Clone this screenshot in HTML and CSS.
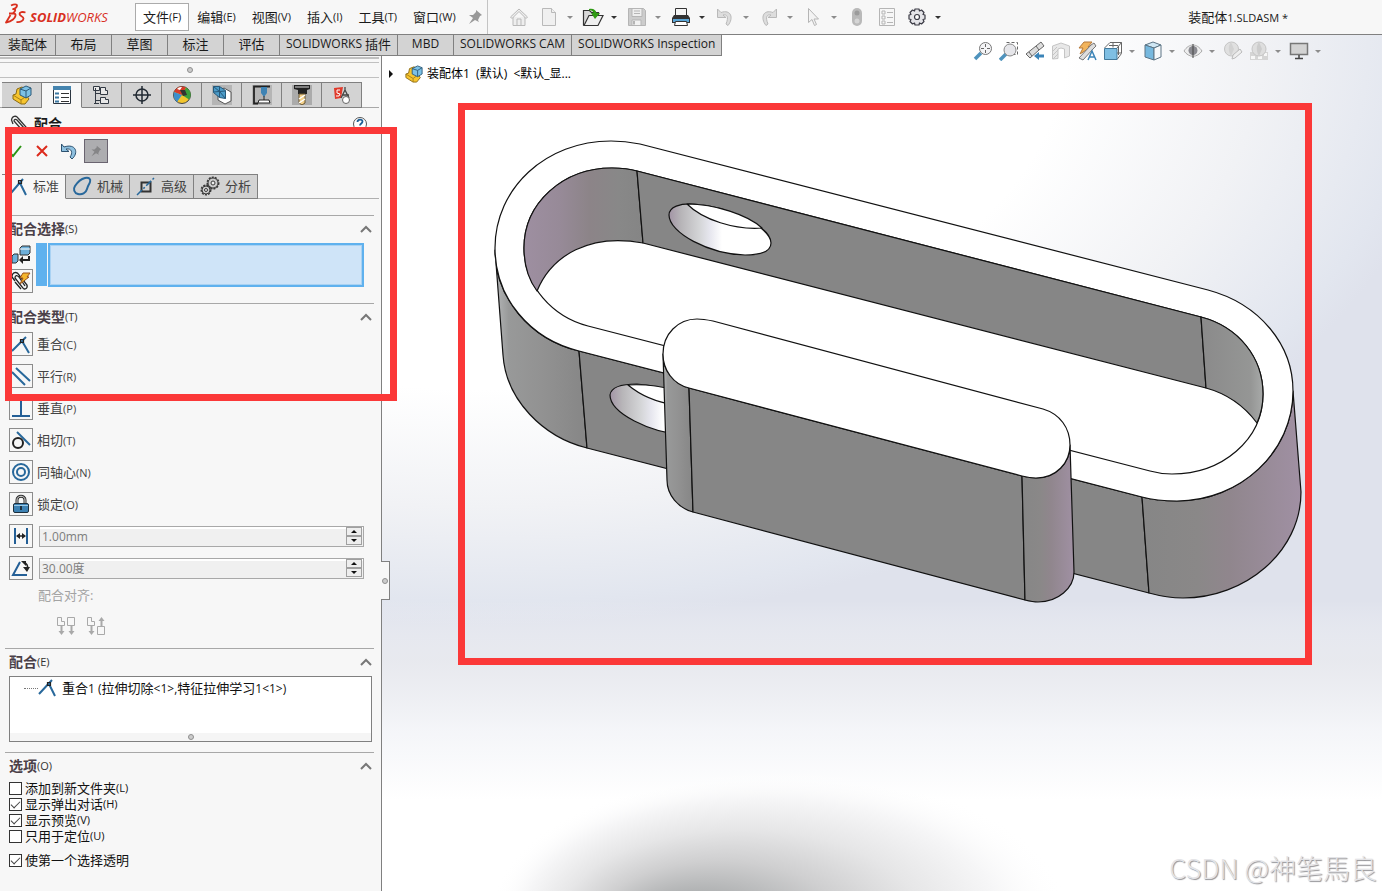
FILE: index.html
```html
<!DOCTYPE html>
<html lang="zh-CN">
<head>
    <meta charset="UTF-8">
    <title>装配体1.SLDASM</title>
    <link rel="stylesheet" href="styles.css">
</head>
<body>
    <header class="title-bar">
        <div class="brand">
            <svg width="22" height="22" viewBox="0 0 22 22" fill="none" stroke="#d9301f" stroke-width="1.800" stroke-linejoin="round">
                <path d="M6 2.500C9 1 12 1 12 2.500S10 5.500 8 6c3 0 3 2 0 4"/>
                <path d="M4 10.500h4.500c3.500 0 2 4-.5 6s-4.500 2.500-7 3L5.500 12"/>
                <path d="M20.500 9.500c-3-1-6-.5-6 1.500s4 2.500 4 4.500-3 4-7 3.500"/>
            </svg>
            <span><b>SOLID</b>WORKS</span>
        </div>
        <nav class="menu">
            <button class="menu-item open">文件<span class="key">(F)</span></button>
            <button class="menu-item">编辑<span class="key">(E)</span></button>
            <button class="menu-item">视图<span class="key">(V)</span></button>
            <button class="menu-item">插入<span class="key">(I)</span></button>
            <button class="menu-item">工具<span class="key">(T)</span></button>
            <button class="menu-item">窗口<span class="key">(W)</span></button>
        </nav>
        <button class="pin" aria-label="固定">
            <svg width="16" height="16" viewBox="0 0 16 16" fill="#999"><path d="M9 1l6 5-2 1-2 4 1 2-4-2-6 4 4-6-4-3 4 0 3-3z"/></svg>
        </button>
        <div class="quick-tools">
            <button class="tool" aria-label="主页"><svg width="20" height="20" viewBox="0 0 20 20" fill="#eee" stroke="#b9b9b9"><path d="M4 10v8.500h12V10"/><path d="M1.500 10 10 2l8.500 8-1.500 1.500-7-7-7 7z"/><path d="M8 18v-6h4v6"/></svg></button>
            <button class="tool" aria-label="新建"><svg width="20" height="20" viewBox="0 0 20 20" fill="#f0f0f0" stroke="#b9b9b9"><path d="M3.500 1.500h9l4 4v13h-13z"/><path d="M12.500 1.500v4h4"/></svg></button>
            <button class="caret dim" aria-label="更多"></button>
            <button class="tool" aria-label="打开"><svg width="22" height="20" viewBox="0 0 22 20" stroke="#333" stroke-width="1.200"><path d="M1.500 18.500v-15h6l2 2h7v3" fill="#d8d8d8"/><path d="M2 18.500 7 8.500h14l-5 10z" fill="#eee"/><path d="M7 2c4-1 7 1 7.500 4H18l-5 6-4-6h2.500C11 4 9 3 7 3.500z" fill="#2f9a13" stroke="none"/></svg></button>
            <button class="caret" aria-label="更多"></button>
            <button class="tool" aria-label="保存"><svg width="20" height="20" viewBox="0 0 20 20" fill="#ccc" stroke="#b5b5b5"><path d="M1.500 1.500h15l2 2v15h-17z"/><path d="M5 1.500h10v8H5z" fill="#eee"/><path d="M7 4h6M7 6.500h6"/><path d="M5 13h9v5.500H5z" fill="#f2f2f2"/><path d="M7 14v3.500" stroke-width="2"/></svg></button>
            <button class="caret dim" aria-label="更多"></button>
            <button class="tool" aria-label="打印"><svg width="20" height="20" viewBox="0 0 20 20"><path d="M4.500 1.500h11v8h-11z" fill="#f5f5f5" stroke="#333"/><path d="M3 8h14l2 3v5H1v-5z" fill="#333"/><path d="M2 12h16v3H2z" fill="#5aa5d6"/><path d="M4.500 14.500h11l1 4h-13z" fill="#fff" stroke="#333"/></svg></button>
            <button class="caret" aria-label="更多"></button>
            <button class="tool" aria-label="撤销"><svg width="20" height="20" viewBox="0 0 20 20" fill="#ddd" stroke="#b9b9b9"><path d="M2.500 2v8.500H11L8 8c4-1 6 2 3 9l2 1.500C19 11 16 2 6 5.500z"/></svg></button>
            <button class="caret dim" aria-label="更多"></button>
            <button class="tool" aria-label="重做"><svg width="20" height="20" viewBox="0 0 20 20" fill="#ddd" stroke="#b9b9b9"><path d="M17.500 2v8.500H9L12 8c-4-1-6 2-3 9l-2 1.500C1 11 4 2 14 5.500z"/></svg></button>
            <button class="caret dim" aria-label="更多"></button>
            <button class="tool" aria-label="选择"><svg width="20" height="20" viewBox="0 0 20 20" fill="#f3f3f3" stroke="#b5b5b5"><path d="M5.500 1.500v14l3.500-3 2.500 6 2-1-2.500-5.500h4.500z"/></svg></button>
            <button class="caret dim" aria-label="更多"></button>
            <button class="tool" aria-label="重建"><svg width="20" height="20" viewBox="0 0 20 20"><rect x="5" y="1" width="10" height="18" rx="5" fill="#b9b9b9"/><circle cx="10" cy="6" r="2.500" fill="#9b9b9b"/><circle cx="10" cy="14" r="2.500" fill="#d5d5d5"/></svg></button>
            <button class="tool" aria-label="文件属性"><svg width="20" height="20" viewBox="0 0 20 20" fill="none" stroke="#b5b5b5"><path d="M2.500 1.500h15v17h-15zM5 4h3v3H5zM5 9h3v3H5zM5 14h3v3H5zM10 5.500h6M10 10.500h6M10 15.500h6"/></svg></button>
            <button class="tool" aria-label="选项"><svg width="18" height="18" viewBox="0 0 18 18" fill="#e4e4e8" stroke="#3a3a44" stroke-width="1.200" stroke-linejoin="round"><path d="M7 1h4l.5 2 2-1 2.500 2.500-1 2 2 .5v4l-2 .5 1 2-2.500 2.500-2-1-.5 2H7l-.5-2-2 1L2 13.500l1-2L1 11V7l2-.5-1-2L4.500 2l2 1z"/><circle cx="9" cy="9" r="2.500" fill="#fff"/></svg></button>
            <button class="caret" aria-label="更多"></button>
        </div>
        <div class="doc-name">装配体<span class="key">1.SLDASM *</span></div>
    </header>

    <div class="workspace">
        <!-- graphics area: backdrop and both parts -->
        <div class="scene">
            <svg width="100%" height="100%" viewBox="382 35 1000 856" preserveAspectRatio="xMidYMid slice">
                <defs>
                    <radialGradient id="sky" gradientUnits="userSpaceOnUse" cx="0" cy="0" r="1" gradientTransform="translate(480 35) scale(980 590)">
                        <stop offset="0.600" stop-color="#fff"/>
                        <stop offset="0.800" stop-color="#f1f2f5"/>
                        <stop offset="0.960" stop-color="#e2e6ef"/>
                        <stop offset="1.000" stop-color="#dfe2ec"/>
                    </radialGradient>
                    <linearGradient id="ground" gradientUnits="userSpaceOnUse" x1="0" y1="600" x2="0" y2="800">
                        <stop offset="0" stop-color="#fff" stop-opacity="0"/>
                        <stop offset="0.300" stop-color="#f0f0f1" stop-opacity="0.500"/>
                        <stop offset="0.650" stop-color="#f8f9fb" stop-opacity="0.850"/>
                        <stop offset="1" stop-color="#fff"/>
                    </linearGradient>
                    <radialGradient id="shade" gradientUnits="userSpaceOnUse" cx="0" cy="0" r="1" fx="-0.360" fy="0.080" gradientTransform="translate(780 915) scale(290 145)">
                        <stop offset="0" stop-color="#9c9c9c"/>
                        <stop offset="0.200" stop-color="#adafb0"/>
                        <stop offset="0.420" stop-color="#cfcfd0"/>
                        <stop offset="0.620" stop-color="#e6e6e7"/>
                        <stop offset="0.820" stop-color="#f6f6f7"/>
                        <stop offset="1" stop-color="#fff" stop-opacity="0"/>
                    </radialGradient>
                    <linearGradient id="wallLeft"><stop offset="0" stop-color="#9e8fa1"/><stop offset="0.300" stop-color="#978a98"/><stop offset="0.550" stop-color="#8c8488"/><stop offset="0.800" stop-color="#888"/><stop offset="1" stop-color="#858585"/></linearGradient>
                    <linearGradient id="wallRight"><stop offset="0" stop-color="#8a8a8a"/><stop offset="0.800" stop-color="#959695"/><stop offset="1" stop-color="#a8aaa9"/></linearGradient>
                    <linearGradient id="outLeft"><stop offset="0" stop-color="#b5b7b8"/><stop offset="0.150" stop-color="#989999"/><stop offset="0.500" stop-color="#929292"/><stop offset="1" stop-color="#868686"/></linearGradient>
                    <linearGradient id="outRight"><stop offset="0" stop-color="#868686"/><stop offset="0.350" stop-color="#8a8888"/><stop offset="0.550" stop-color="#90868d"/><stop offset="1" stop-color="#a090a3"/></linearGradient>
                    <linearGradient id="hole"><stop offset="0" stop-color="#a294a5"/><stop offset="0.120" stop-color="#b7b5b8"/><stop offset="0.300" stop-color="#d4d5d7"/><stop offset="0.400" stop-color="#e6e6ee"/><stop offset="0.520" stop-color="#fff"/></linearGradient>
                </defs>
                <rect x="382" y="35" width="1000" height="856" fill="url(#sky)"/>
                <rect x="382" y="600" width="1000" height="291" fill="url(#ground)"/>
                <ellipse cx="780" cy="915" rx="290" ry="145" fill="url(#shade)"/>

                <g stroke="#111" stroke-width="1.200" stroke-linejoin="round">
                    <path fill="url(#outLeft)" d="M495 250 503 355C506 400 543 437 587 448L579 351C530 339 495 298 495 250Z"/>
                    <path fill="#868686" d="M579 351 1142 497 1149 593 587 448Z"/>
                    <path fill="url(#outRight)" d="M1142 497C1153 500 1165 501 1177 501 1240 501 1293 452 1293 391L1301 492C1301 552 1245 598 1183 598 1170 598 1160 596 1149 593Z"/>
                    <path fill="#fff" d="M640 144C630 142 620 141 611 141 546 141 495 188 495 248 495 298 530 339 579 351L1142 497C1153 500 1165 501 1177 501 1240 501 1293 452 1293 391 1293 345 1260 304 1208 290Z"/>
                    <path fill="#fff" d="M637 171C630 169 622 168 612 168 563 168 524 203 524 248 524 286 553 317 588 326L1150 471C1157 473 1164 474 1172 474 1222 474 1263 440 1263 394 1263 358 1239 327 1201 317Z"/>
                    <path fill="url(#wallLeft)" d="M637 171C630 169 622 168 612 168 563 168 524 203 524 248 524 264 528 279 537 291 552 255 590 233 643 243Z"/>
                    <path fill="#868686" d="M637 171 1201 317 1206 388 643 243Z"/>
                    <path fill="url(#wallRight)" d="M1201 317C1239 327 1263 358 1263 394 1263 404 1261 414 1257 423 1245 407 1228 394 1206 388Z"/>
                    <path fill="url(#hole)" d="M669 215C669 207 680 203 694 204 728 206 771 227 771 243 771 251 761 255 745 255 709 254 669 233 669 215Z"/>
                    <path fill="#fff" d="M687 204C703 220 735 230 762 228 748 215 715 204 687 204Z"/>
                    <path fill="url(#hole)" d="M610 395C611 387 622 384 637 384 670 386 712 408 712 424 711 432 700 436 685 435 650 433 610 413 610 395Z"/>
                    <path fill="#fff" d="M628 385C640 395 655 402 675 405V390C660 386 644 384 628 385Z"/>
                </g>
                <g stroke="#111" stroke-width="1.200" stroke-linejoin="round">
                    <path fill="url(#outLeft)" d="M663 354 667 480C667 495 678 508 693 512L689 388C673 384 663 370 663 354Z"/>
                    <path fill="#868686" d="M689 388 1022 476 1025 600 693 512Z"/>
                    <path fill="url(#outRight)" d="M1022 476C1026 477 1031 478 1036 478 1056 478 1070 463 1070 445L1074 572C1074 588 1058 602 1038 602 1033 602 1029 601 1025 600Z"/>
                    <path fill="#fff" d="M713 321C708 320 702 319 697 319 678 319 663 334 663 354 663 370 673 384 689 388L1022 476C1026 477 1031 478 1036 478 1056 478 1070 463 1070 445 1070 428 1060 414 1043 409Z"/>
                </g>
                <rect x="461.500" y="106.500" width="847" height="555" fill="none" stroke="#fb3838" stroke-width="7"/>
            </svg>
        </div>

        <nav class="command-tabs">
            <button>装配体</button>
            <button>布局</button>
            <button>草图</button>
            <button>标注</button>
            <button>评估</button>
            <button><span class="lat">SOLIDWORKS</span> 插件</button>
            <button><span class="lat">MBD</span></button>
            <button><span class="lat">SOLIDWORKS CAM</span></button>
            <button><span class="lat">SOLIDWORKS Inspection</span></button>
        </nav>

        <div class="view-tools">
            <button class="tool" aria-label="整屏显示全图"><svg width="20" height="20" viewBox="0 0 20 20"><path d="M2 18l6-6" stroke="#4f93bd" stroke-width="3.500"/><circle cx="12.500" cy="7.500" r="6" fill="#f4f4f6" stroke="#777"/><path d="M12.500 3v9M8 7.500h9" stroke="#666" stroke-dasharray="3 3"/></svg></button>
            <button class="tool" aria-label="局部放大"><svg width="20" height="20" viewBox="0 0 20 20"><path d="M7.500 1.500h11v12H14" fill="none" stroke="#666" stroke-dasharray="3 2"/><path d="M1 19l6-6" stroke="#4f93bd" stroke-width="3.500"/><circle cx="11" cy="9" r="6" fill="#e6e6ea" stroke="#888"/></svg></button>
            <button class="tool" aria-label="上一视图"><svg width="20" height="20" viewBox="0 0 20 20"><path d="M1 13 11 5l5-4 3 4-5 4-9 8z" fill="#ddd" stroke="#666"/><path d="M11 5l3 4M4 11l3 4" stroke="#666"/><path d="M9 15l5-4v2.500h5v3h-5V19z" fill="#3b84b8"/></svg></button>
            <button class="tool" aria-label="剖面视图"><svg width="20" height="20" viewBox="0 0 20 20" fill="#e8e8e8" stroke="#c5c5c5"><path d="M1.500 5 10 2l8.500 3v10l-5 2V8L10 7 7 8v9.500l-5.500.5z"/><path d="M2 10l4-4M2 14l5-5M2 18l5-5"/></svg></button>
            <button class="tool" aria-label="动态注解视图"><svg width="20" height="20" viewBox="0 0 20 20"><path d="M7 1h8l-4 5h3L3 13l3-6H2z" fill="#f2b45c" stroke="#b5793a"/><path d="M2 17 14 4l3-2 2 3-3 3L6 19z" fill="#ddd" stroke="#777"/><path d="M11 19l4-9 4 9M12 16h6" fill="none" stroke="#3b84b8" stroke-width="1.500"/></svg></button>
            <button class="tool" aria-label="视图定向"><svg width="20" height="20" viewBox="0 0 20 20" stroke="#666"><path d="M1.500 7 7 1.500h11.500v11L14 18.500" fill="#fff"/><path d="M1.500 7.500H14v11H1.500z" fill="#7fbfe3" stroke="#43799b"/><path d="M14 7l4.500-5.500M10 1.500v5M14 12h4M15.500 5v9M6 4.500h9" fill="none"/></svg></button>
            <button class="caret grey" aria-label="更多"></button>
            <button class="tool" aria-label="显示样式"><svg width="20" height="20" viewBox="0 0 20 20" stroke="#5c7485"><path d="M2 4l8-3 8 3-7 3z" fill="#cfe7f4"/><path d="M2 4l9 3v12l-9-3z" fill="#76b8de"/><path d="M11 7l7-3v12l-7 3z" fill="#f5f8fa"/></svg></button>
            <button class="caret grey" aria-label="更多"></button>
            <button class="tool" aria-label="隐藏/显示"><svg width="20" height="20" viewBox="0 0 20 20"><path d="M1 10c5-8 13-8 18 0-5 7-13 7-18 0z" fill="#eee" stroke="#aaa"/><circle cx="10" cy="9.500" r="4.500" fill="#8a8a90"/><path d="M10 3v14" stroke="#444"/></svg></button>
            <button class="caret grey" aria-label="更多"></button>
            <button class="tool" aria-label="编辑外观"><svg width="20" height="20" viewBox="0 0 20 20"><circle cx="8.500" cy="8" r="7" fill="#e0e0e0" stroke="#c5c5c5"/><path d="M8 1c-3 4-3 9 0 14l3-7z" fill="#d2d2d2"/><path d="M9 18l1-4 7-6 2 3-7 6z" fill="#eee" stroke="#bbb"/></svg></button>
            <button class="tool" aria-label="应用布景"><svg width="20" height="20" viewBox="0 0 20 20"><path d="M1 11h18v8H1z" fill="#d5d5d5"/><path d="M2 15h4v3H2zM9 15h4v3H9zM15 12h3v3h-3z" fill="#f7f7f7"/><circle cx="10" cy="8" r="7" fill="#dedede" stroke="#c5c5c5"/><path d="M10 1c-3 4-3 9 0 14l3-7z" fill="#ccc"/></svg></button>
            <button class="caret grey" aria-label="更多"></button>
            <button class="tool" aria-label="视图设定"><svg width="20" height="20" viewBox="0 0 20 20"><path d="M1.500 2.500h17v11h-17z" fill="#d3d3d3" stroke="#777" stroke-width="1.500"/><path d="M10 14v3M6 17.500h8" stroke="#444" stroke-width="1.500"/></svg></button>
            <button class="caret grey" aria-label="更多"></button>
        </div>

        <main class="columns">
            <aside class="panel">
                <div class="panel-top"><div class="grip"><i class="dot"></i></div></div>
                <nav class="manager-tabs">
                    <button aria-label="设计树"><svg width="20" height="20" viewBox="0 0 20 20"><path d="M1 10 4 9l1-5 5-2 3 2v4l4 6-4 5-4 0-8-5z" fill="#f7c52e" stroke="#8a6a14"/><path d="M1 10l8 5v4M9 15l4-3" fill="none" stroke="#a57f1a"/><path d="M8 4l6-3 5 2v7l-5 3-6-3z" fill="#7cc1e6" stroke="#2d5a78"/><path d="M8 4l6 2 5-3M14 6v7" fill="none" stroke="#2d5a78"/></svg></button>
                    <button class="active" aria-label="属性"><svg width="20" height="20" viewBox="0 0 20 20"><path d="M1.500 1.500h17v17h-17z" fill="#fff" stroke="#2b3540"/><path d="M1 1h18v4H1z" fill="#4584ae"/><path d="M3 7.500h4v2H3zM3 11.500h4v2H3zM3 15.500h4v2H3z" fill="#3b78a2"/><path d="M9 8.500h8M9 12.500h8M9 16.500h8" stroke="#333"/></svg></button>
                    <button aria-label="配置"><svg width="20" height="20" viewBox="0 0 20 20" fill="#e8e8e8" stroke="#333a44"><path d="M3.500 3v16M3.500 8.500H9M3.500 15.500H9M1.500 1.500h6v4h-6zM2 18.500h5"/><path d="M8.500 2.500h5v3h2v4h-7zM8.500 12.500h5v2h3v4h-8z"/></svg></button>
                    <button aria-label="尺寸"><svg width="20" height="20" viewBox="0 0 20 20" fill="none" stroke="#222a33" stroke-width="1.500"><circle cx="10" cy="10" r="6"/><path d="M10 1v18M1 10h18"/></svg></button>
                    <button aria-label="显示"><svg width="20" height="20" viewBox="0 0 20 20"><circle cx="10" cy="10" r="8.500" fill="#f2c52d" stroke="#444"/><path d="M10 10 2 7c2-5 7-7 12-4.500z" fill="#d63c2a"/><path d="M10 10 2 7c-1 4 0 7 3 10z" fill="#3b8fcb"/><path d="M14 2.500c5 3 6 8 3 12L10 10z" fill="#3b9f3b"/><path d="M8 5l5 0 2 5-4 1z" fill="#333"/><path d="M5 4c2-2 4-2 5-2l-2 3z" fill="#fff"/></svg></button>
                    <button aria-label="CAM 特征"><svg width="20" height="20" viewBox="0 0 20 20"><path d="M0 0h20v20H0z" fill="#b5b5b5"/><path d="M6 7l6-4 7 4v9l-6 3-7-4z" fill="#fff" stroke="#555"/><path d="M1.500 1.500h6l6 4v8l-6-1-6-5z" fill="#4b9cc9" stroke="#27597a"/><path d="M1.500 1.500l6 5 6 7M7.500 1.500v11M1.500 7l12-1" fill="none" stroke="#27597a"/></svg></button>
                    <button aria-label="CAM 操作"><svg width="20" height="20" viewBox="0 0 20 20"><path d="M0 0h20v20H0z" fill="#b5b5b5"/><path d="M5 1.500h-3v17h4M4 1.500h14" fill="none" stroke="#222" stroke-width="1.800"/><path d="M9 2h6v6l-3 4-3-4z" fill="#3e83b4"/><path d="M12 11v4" stroke="#222"/><path d="M7 15h10l1 3H6z" fill="#fff" stroke="#222"/></svg></button>
                    <button aria-label="CAM 刀具"><svg width="20" height="20" viewBox="0 0 20 20"><path d="M0 0h20v20H0z" fill="#ababab"/><path d="M2 0h16v4l-3 1v4H6V5L2 4z" fill="#222"/><path d="M3 2h14" stroke="#ddd"/><path d="M7 9h6v9l-3 2-3-2z" fill="#f2cf88" stroke="#695632"/><path d="M7 14l6-4M7 18l6-4" stroke="#fff" stroke-width="1.500"/></svg></button>
                    <button aria-label="检查"><svg width="20" height="20" viewBox="0 0 20 20"><path d="M2 3l9-1-2 11-6 1z" fill="#e03a2b"/><path d="M8 5H5v3l3 1-1 2H4" fill="none" stroke="#fff"/><path d="M13 2v3M13 5l-4 8M13 5l4 8M10 10h7" fill="none" stroke="#444" stroke-width="1.300"/><circle cx="14" cy="15" r="3.500" fill="#fff" stroke="#666"/></svg></button>
                </nav>

                <div class="panel-title">
                    <svg width="18" height="18" viewBox="0 0 18 18" fill="none" stroke="#333" stroke-width="1.300"><path d="M3 9 1.500 5C2 1 6 0 8 3l8 9c1 3-2 5-4 3L4 6c0-2 2-2 3-1l7 8"/></svg>
                    <h2>配合</h2>
                    <button class="help" aria-label="帮助"><svg width="16" height="16" viewBox="0 0 16 16"><circle cx="8" cy="8" r="6.500" fill="#fff" stroke="#555"/><path d="M5.500 6c0-3 5-3 5-.5C10.500 7.500 8 7.500 8 9.500M8 11v1.500" fill="none" stroke="#1f5f95" stroke-width="1.800"/></svg></button>
                </div>

                <div class="actions">
                    <button aria-label="确定"><svg width="18" height="18" viewBox="0 0 18 18"><path d="M3 10l4 4 8-10" fill="none" stroke="#2c9414" stroke-width="2"/></svg></button>
                    <button aria-label="取消"><svg width="18" height="18" viewBox="0 0 18 18"><path d="M4 4l10 10M14 4 4 14" stroke="#dc2a1c" stroke-width="2"/></svg></button>
                    <button aria-label="撤销"><svg width="18" height="18" viewBox="0 0 18 18"><path d="M1.500 2v7.500H9L6 7c6-1 7 4 4 8l2 2c7-6 4-16-8-12z" fill="#8fc1e0" stroke="#2d5270"/></svg></button>
                    <button class="keep" aria-label="保持可见"><svg width="12" height="12" viewBox="0 0 16 16" fill="#858587"><path d="M9 1l6 5-2 1-2 4 1 2-4-2-6 4 4-6-4-3 4 0 3-3z"/></svg></button>
                </div>

                <nav class="mate-tabs">
                    <button class="active"><svg width="20" height="20" viewBox="0 0 20 20" fill="none" stroke="#28689b" stroke-width="2"><path d="M3 17 15 3M12 7l6 12"/><path d="M10.500 4.500h3v3h-3z" stroke="#222" stroke-width="1.200"/></svg>标准</button>
                    <button><svg width="20" height="20" viewBox="0 0 20 20"><path d="M13 2c4-1 6 1 5 4s-2 3-3 7-5 6-9 5-5-5-3-8 6-7 10-8z" fill="none" stroke="#28689b" stroke-width="2"/></svg>机械</button>
                    <button><svg width="20" height="20" viewBox="0 0 20 20" fill="none"><path d="M5.500 6.500h9v9h-9z" stroke="#333" stroke-width="2"/><path d="M1 19 19 1" stroke="#28689b" stroke-width="1.500" stroke-dasharray="7 2 2 2"/></svg>高级</button>
                    <button><svg width="20" height="20" viewBox="0 0 20 20" fill="#ccc" stroke="#3a3a3a"><circle cx="13" cy="7" r="5.500" fill="none" stroke-width="2" stroke-dasharray="2 1"/><circle cx="13" cy="7" r="5"/><circle cx="13" cy="7" r="2" fill="#eee"/><circle cx="6" cy="14" r="4.500" fill="none" stroke-width="2" stroke-dasharray="2 1"/><circle cx="6" cy="14" r="4"/><circle cx="6" cy="14" r="1.500" fill="#eee"/></svg>分析</button>
                </nav>

                <section class="group">
                    <h3>配合选择<span class="key">(S)</span><svg class="fold" width="12" height="8" viewBox="0 0 12 8"><path d="M1 7l5-5 5 5"/></svg></h3>
                    <div class="selection">
                        <div class="selection-icons">
                            <button class="plain" aria-label="要配合的实体"><svg width="20" height="20" viewBox="0 0 20 20"><path d="M9 3l2-2h8v7l-2 2H9z" fill="#6eb0da" stroke="#333"/><path d="M9 4h10" stroke="#fff"/><path d="M1 11l2-2h4v7l-2 2H1z" fill="#6eb0da" stroke="#333"/><path d="M18 11v4h-7" fill="none" stroke="#222" stroke-width="2"/><path d="M12 11v8l-4-4z" fill="#222"/></svg></button>
                            <button class="box" aria-label="多配合模式"><svg width="20" height="20" viewBox="0 0 20 20"><path d="M4 10 1 6c0-5 5-6 7-2l8 10c1 4-3 5-4 3L4 7c0-3 2-3 4-1l6 9M4 11l6 7" fill="none" stroke="#222" stroke-width="1.300"/><path d="M12 2h7l-3 4h2l-9 7 3-6H9z" fill="#f4b52c" stroke="#9c531b"/></svg></button>
                        </div>
                        <div class="selection-mark"></div>
                        <textarea class="selection-box" aria-label="配合选择"></textarea>
                    </div>
                </section>

                <section class="group mates">
                    <h3>配合类型<span class="key">(T)</span><svg class="fold" width="12" height="8" viewBox="0 0 12 8"><path d="M1 7l5-5 5 5"/></svg></h3>
                    <div class="mate-list">
                        <button class="mate"><span class="box"><svg width="20" height="20" viewBox="0 0 20 20" fill="none" stroke="#28689b" stroke-width="2"><path d="M1 17 15 3M11 7l7 12"/><path d="M9.500 5.500h3v3h-3z" stroke="#222" stroke-width="1.200"/></svg></span><span>重合<span class="key">(C)</span></span></button>
                        <button class="mate"><span class="box"><svg width="20" height="20" viewBox="0 0 20 20" fill="none" stroke="#28689b" stroke-width="2"><path d="M1 6l13 13M5 2l14 13"/></svg></span><span>平行<span class="key">(R)</span></span></button>
                        <button class="mate"><span class="box"><svg width="20" height="20" viewBox="0 0 20 20" fill="none" stroke="#245f96" stroke-width="2"><path d="M10 1v17M1 18h18"/></svg></span><span>垂直<span class="key">(P)</span></span></button>
                        <button class="mate"><span class="box"><svg width="20" height="20" viewBox="0 0 20 20" fill="none" stroke="#28689b" stroke-width="2"><path d="M6 2l13 13"/><circle cx="7" cy="13" r="5" stroke="#222"/></svg></span><span>相切<span class="key">(T)</span></span></button>
                        <button class="mate"><span class="box"><svg width="20" height="20" viewBox="0 0 20 20" fill="none" stroke="#28689b" stroke-width="2"><circle cx="10" cy="10" r="8"/><circle cx="10" cy="10" r="4"/></svg></span><span>同轴心<span class="key">(N)</span></span></button>
                        <button class="mate"><span class="box"><svg width="20" height="20" viewBox="0 0 20 20"><path d="M6 10V6c0-5 8-5 8 0v4" fill="none" stroke="#333" stroke-width="3"/><path d="M6 10V6c0-5 8-5 8 0v4" fill="none" stroke="#ddd"/><rect x="2.500" y="9.500" width="15" height="9" rx="1.500" fill="#3d82b4" stroke="#1d2f3d"/><path d="M3 11.500h14" stroke="#9ccbe8"/><path d="M10 12v4" stroke="#1d2f3d" stroke-width="2"/></svg></span><span>锁定<span class="key">(O)</span></span></button>
                        <div class="mate">
                            <label class="box" for="distance"><svg width="20" height="20" viewBox="0 0 20 20"><path d="M4 2v16M16 2v16" stroke="#245f96" stroke-width="2"/><path d="M6 10h8" stroke="#222" stroke-width="1.500"/><path d="M5 10l4-3v6zM15 10l-4-3v6z" fill="#222"/></svg></label>
                            <div class="spin">
                                <input id="distance" type="text" value="1.00mm">
                                <div class="spin-buttons"><button class="up" aria-label="增加"></button><button class="down" aria-label="减少"></button></div>
                            </div>
                        </div>
                        <div class="mate">
                            <label class="box" for="angle"><svg width="20" height="20" viewBox="0 0 20 20"><path d="M9 4 2 17h14" fill="none" stroke="#245f96" stroke-width="2"/><path d="M13 5c3 0 4 3 3.500 6" fill="none" stroke="#222" stroke-width="1.500"/><path d="M10 3h5v5zM12 9h7l-3 5z" fill="#222"/></svg></label>
                            <div class="spin">
                                <input id="angle" type="text" value="30.00度">
                                <div class="spin-buttons"><button class="up" aria-label="增加"></button><button class="down" aria-label="减少"></button></div>
                            </div>
                        </div>
                    </div>
                    <p class="align-label">配合对齐:</p>
                    <div class="align-buttons">
                        <button aria-label="同向对齐" disabled><svg width="20" height="20" viewBox="0 0 20 20" fill="none" stroke="#a9a9a9"><path d="M1.500 9.500v-8h4v4h3v4zM11.500 1.500h7v8h-7z"/><path d="M5.500 9v7M15.500 9v7" stroke-width="2"/><path d="M2.500 15h6l-3 4zM12.500 15h6l-3 4z" fill="#a9a9a9" stroke="none"/></svg></button>
                        <button aria-label="反向对齐" disabled><svg width="20" height="20" viewBox="0 0 20 20" fill="none" stroke="#a9a9a9"><path d="M1.500 9.500v-8h4v4h3v4zM11.500 10.500h7v8h-7z"/><path d="M5.500 9v7M15.500 10V4" stroke-width="2"/><path d="M2.500 15h6l-3 4zM12.500 5h6l-3-4z" fill="#a9a9a9" stroke="none"/></svg></button>
                    </div>
                </section>

                <section class="group">
                    <h3>配合<span class="key">(E)</span><svg class="fold" width="12" height="8" viewBox="0 0 12 8"><path d="M1 7l5-5 5 5"/></svg></h3>
                    <div class="mate-tree">
                        <div class="tree-item"><i class="branch"></i><svg width="20" height="20" viewBox="0 0 20 20" fill="none" stroke="#28689b" stroke-width="2"><path d="M1 16 14 2M11 6l6 12"/><path d="M9.500 4.500h3v3h-3z" stroke="#222" stroke-width="1.200"/></svg><span>重合<span class="lat">1 (</span>拉伸切除<span class="lat">&lt;1&gt;,</span>特征拉伸学习<span class="lat">1&lt;1&gt;)</span></span></div>
                        <div class="tree-grip"><i class="dot"></i></div>
                    </div>
                </section>

                <section class="group options">
                    <h3>选项<span class="key">(O)</span><svg class="fold" width="12" height="8" viewBox="0 0 12 8"><path d="M1 7l5-5 5 5"/></svg></h3>
                    <label><input type="checkbox">添加到新文件夹<span class="key">(L)</span></label>
                    <label><input type="checkbox" checked>显示弹出对话<span class="key">(H)</span></label>
                    <label><input type="checkbox" checked>显示预览<span class="key">(V)</span></label>
                    <label><input type="checkbox">只用于定位<span class="key">(U)</span></label>
                    <label class="apart"><input type="checkbox" checked>使第一个选择透明</label>
                </section>
                <div class="panel-handle"><i class="dot"></i></div>
                <div class="marker"></div>
            </aside>

            <div class="viewport">
                <div class="flyout-tree">
                    <i class="expand"></i>
                    <svg width="18" height="18" viewBox="0 0 20 20"><path d="M1 10 4 9l1-5 5-2 3 2v4l4 6-4 5-4 0-8-5z" fill="#f7c52e" stroke="#8a6a14"/><path d="M1 10l8 5v4M9 15l4-3" fill="none" stroke="#a57f1a"/><path d="M8 4l6-3 5 2v7l-5 3-6-3z" fill="#7cc1e6" stroke="#2d5a78"/><path d="M8 4l6 2 5-3M14 6v7" fill="none" stroke="#2d5a78"/></svg>
                    <span>装配体1&nbsp; (默认) &nbsp;&lt;默认_显...</span>
                </div>
            </div>
        </main>
        <div class="watermark">CSDN @神笔馬良</div>
    </div>
</body>
</html>
```
FILE: styles.css
```css
* {
    box-sizing: border-box;
    margin: 0;
    padding: 0;
}

body {
    display: flex;
    flex-direction: column;
    min-height: 100vh;
    background: #f7f7f7;
    color: #1a1a1a;
    font-family: "Open Sans", "Noto Sans CJK SC", sans-serif;
    font-size: 13px;
    line-height: 18px;
}

button {
    display: flex;
    align-items: center;
    justify-content: center;
    border: 0;
    background: none;
    color: inherit;
    font: inherit;
    white-space: nowrap;
}

svg {
    display: block;
    flex: none;
}

.key {
    font-size: 11px;
}

.lat {
    font-size: 12px;
}

/* title bar */
.title-bar {
    display: flex;
    align-items: center;
    height: 35px;
    border-bottom: 1px solid #808080;
}

.brand {
    display: flex;
    align-items: center;
    gap: 3px;
    width: 135px;
    padding-left: 5px;
    color: #d9301f;
    font-style: italic;
}

.brand svg {
    margin-bottom: 6px;
}

.menu {
    display: flex;
}

.menu-item {
    height: 28px;
    padding: 0 7px;
    border: 1px solid transparent;
}

.menu-item.open {
    background: #fff;
    border-color: #ababab;
}

.pin {
    width: 24px;
    height: 34px;
    border-right: 1px solid #c4c4c4;
}

.quick-tools {
    display: flex;
    padding-left: 16px;
}

.quick-tools .tool {
    width: 30px;
    height: 24px;
}

.caret {
    width: 12px;
    height: 24px;
    margin-right: 2px;
}

.caret::before {
    content: '';
    border: 3px solid transparent;
    border-top-color: #333;
    border-bottom: 0;
}

.caret.dim::before,
.caret.grey::before {
    border-top-color: #8c8c8c;
}

.doc-name {
    margin-left: auto;
    padding-right: 94px;
    white-space: nowrap;
}

/* workspace */
.workspace {
    position: relative;
    display: flex;
    flex-direction: column;
    flex: 1;
}

.scene {
    position: absolute;
    inset: 0 0 0 382px;
    overflow: hidden;
}

.command-tabs {
    position: relative;
    display: flex;
    height: 21px;
}

.command-tabs button {
    gap: 3px;
    min-width: 56px;
    padding: 0 6px 2px;
    background: #d3d3d3;
    border-right: 1px solid #808080;
    border-bottom: 1px solid #808080;
}

.view-tools {
    position: absolute;
    top: 4px;
    right: 56px;
    display: flex;
}

.view-tools .tool {
    width: 26px;
    height: 24px;
}

.columns {
    position: relative;
    display: flex;
    flex: 1;
}

/* property manager */
.panel {
    position: relative;
    width: 382px;
    background: #f7f7f7;
    border-right: 1px solid #808080;
}

.panel-top {
    margin: 1px 2px 0 0;
    padding-top: 3px;
    border-top: 2px solid #c0c0c0;
}

.grip {
    display: flex;
    align-items: center;
    justify-content: center;
    height: 16px;
    border-top: 1px solid #c0c0c0;
    border-bottom: 1px solid #c0c0c0;
}

.dot {
    width: 6px;
    height: 6px;
    background: #ccc;
    border: 1px solid #8f8f8f;
    border-radius: 50%;
}

.manager-tabs {
    display: flex;
    height: 26px;
    margin: 4px 2px 0 0;
    padding-left: 2px;
    border-bottom: 1px solid #a8a8a8;
}

.manager-tabs button {
    width: 40px;
    height: 26px;
    background: #d3d3d3;
    border: 1px solid #808080;
    border-left: 0;
}

.manager-tabs .active,
.mate-tabs .active {
    background: #f7f7f7;
    border-bottom-color: #f7f7f7;
}

.panel-title {
    display: flex;
    align-items: center;
    gap: 6px;
    height: 31px;
    padding: 0 13px 0 10px;
}

.panel-title h2 {
    font-size: 14px;
}

.help {
    margin-left: auto;
}

.actions {
    display: flex;
    gap: 3px;
    padding-left: 3px;
}

.actions button {
    width: 24px;
    height: 24px;
}

.actions .keep {
    background: #adadb0;
    border: 1px solid #6a6470;
}

.mate-tabs {
    display: flex;
    height: 25px;
    margin: 11px 2px 16px 2px;
    border-bottom: 1px solid #b0b0b0;
}

.mate-tabs button {
    justify-content: flex-start;
    gap: 5px;
    width: 64px;
    height: 25px;
    padding: 0 0 2px 6px;
    background: #d3d3d3;
    border: 1px solid #808080;
    border-left: 0;
    color: #444;
}

.group {
    margin: 0 7px 0 5px;
    padding: 0 10px 10px 4px;
    border-top: 1px solid #a8a8a8;
}

.group h3 {
    display: flex;
    align-items: center;
    height: 27px;
    margin-right: -8px;
    padding-bottom: 2px;
    color: #4a4048;
    font-size: 14px;
}

.group h3 .key {
    color: #333;
    font-weight: normal;
}

.fold {
    margin-left: auto;
    fill: none;
    stroke: #777;
    stroke-width: 2;
}

.selection {
    display: flex;
    align-items: flex-start;
}

.selection-icons {
    display: flex;
    flex-direction: column;
    gap: 2px;
}

.plain,
.box {
    display: flex;
    align-items: center;
    justify-content: center;
    flex: none;
    width: 24px;
    height: 24px;
}

.box {
    border: 1px solid #8c8c8c;
}

.selection-mark {
    width: 11px;
    height: 43px;
    margin: 0 1px 0 3px;
    background: #5fb1ee;
}

.selection-box {
    flex: 1;
    min-width: 0;
    height: 44px;
    background: #cfe4f8;
    border: 2px solid #5fb1ee;
    box-shadow: inset 0 0 0 1px #a9d2f3;
    outline: none;
    resize: none;
}

.group.mates {
    padding-bottom: 12px;
}

.mate-list {
    display: flex;
    flex-direction: column;
    gap: 8px;
    padding-top: 1px;
}

.mate {
    display: flex;
    justify-content: flex-start;
    align-items: center;
    height: 24px;
    color: #444;
}

.mate .box {
    margin-right: 4px;
}

.spin {
    display: flex;
    flex: 1;
    align-items: center;
    height: 21px;
    margin-left: 2px;
    padding-right: 1px;
    background: #f0f0f0;
    border: 1px solid #a8a8a8;
    box-shadow: inset 0 2px #fff;
}

.spin input {
    flex: 1;
    min-width: 0;
    padding-left: 2px;
    border: 0;
    background: none;
    color: #7d7d7d;
    font-family: inherit;
    font-size: 12px;
}

.spin-buttons {
    display: flex;
    flex-direction: column;
}

.spin-buttons button {
    width: 16px;
    height: 9px;
    background: #eee;
    border: 1px solid #a0a0a0;
}

.spin-buttons button::before {
    content: '';
    border: 3px solid transparent;
}

.spin-buttons .up::before {
    border-top: 0;
    border-bottom-color: #111;
}

.spin-buttons .down::before {
    border-bottom: 0;
    border-top-color: #111;
}

.align-label {
    padding: 6px 0 12px 29px;
    color: #a3a3a3;
}

.align-buttons {
    display: flex;
    gap: 10px;
    padding-left: 47px;
}

.mate-tree {
    display: flex;
    flex-direction: column;
    justify-content: space-between;
    height: 66px;
    margin-right: -8px;
    background: #fff;
    border: 1px solid #808080;
}

.tree-item {
    display: flex;
    align-items: center;
    height: 22px;
    padding-left: 14px;
    color: #111;
}

.tree-item svg {
    margin-right: 4px;
}

.branch {
    width: 14px;
    border-top: 1px dotted #777;
}

.tree-grip {
    display: flex;
    justify-content: center;
    padding: 1px;
    background: #f5f5f5;
}

.options label {
    display: flex;
    align-items: center;
    height: 16px;
    color: #111;
}

.options .apart {
    margin-top: 8px;
}

.options input {
    appearance: none;
    width: 13px;
    height: 13px;
    margin-right: 3px;
    background: #fff;
    border: 1px solid #333;
}

.options input:checked::before {
    content: '';
    display: block;
    width: 8px;
    height: 4px;
    margin: 2px 0 0 1px;
    border: solid #444;
    border-width: 0 0 1px 1px;
    transform: rotate(-45deg);
}

.panel-handle {
    position: absolute;
    top: 505px;
    right: -9px;
    display: flex;
    align-items: center;
    justify-content: center;
    width: 9px;
    height: 39px;
    background: #f7f7f7;
    border: 1px solid #808080;
    border-left: 0;
}

/* red frame round the mate settings */
.marker {
    position: absolute;
    top: 71px;
    left: 5px;
    width: 392px;
    height: 274px;
    border: 7px solid #fb3838;
    pointer-events: none;
}

/* graphics area */
.viewport {
    flex: 1;
}

.flyout-tree {
    display: flex;
    align-items: center;
    padding: 9px 0 0 7px;
    color: #000;
    font-size: 12px;
}

.flyout-tree svg {
    margin: 0 4px 0 12px;
}

.expand {
    border: 4px solid transparent;
    border-left-color: #111;
    border-right: 0;
}

.watermark {
    position: absolute;
    right: 5px;
    bottom: 5px;
    color: #e4e4e7;
    font-family: "Noto Sans CJK SC", sans-serif;
    font-size: 27px;
    font-weight: 300;
    line-height: 36px;
    text-shadow: 1px 1px 1px #909094;
}
```
